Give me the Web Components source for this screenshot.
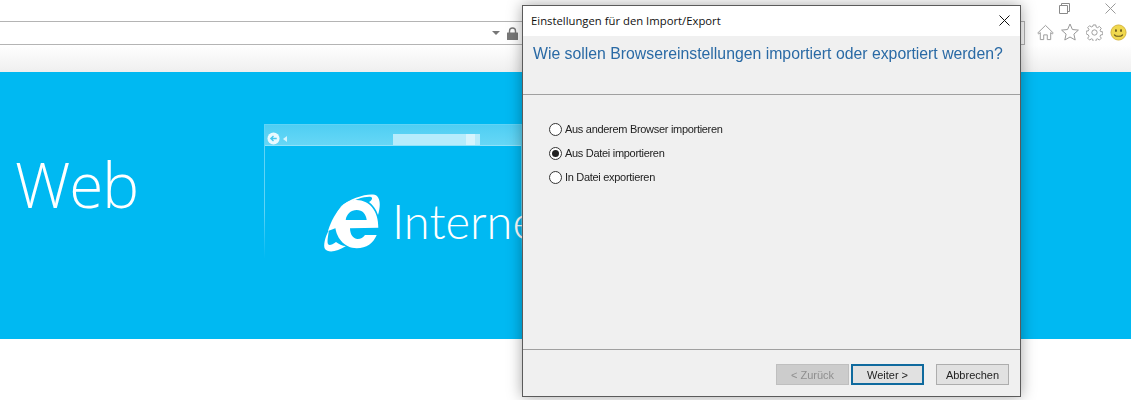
<!DOCTYPE html>
<html lang="de">
<head>
<meta charset="utf-8">
<title>Import/Export</title>
<style>
    html, body { margin: 0; height: 100%; background: #fff; overflow: hidden; }
    body { font-family: "Liberation Sans", Arial, sans-serif; }
</style>
</head>
<body>
<browser-window>
    <hero-banner></hero-banner>
</browser-window>
<import-dialog heading="Einstellungen für den Import/Export" question="Wie sollen Browsereinstellungen importiert oder exportiert werden?">
    <radio-option>Aus anderem Browser importieren</radio-option>
    <radio-option checked>Aus Datei importieren</radio-option>
    <radio-option>In Datei exportieren</radio-option>
    <dialog-button slot="buttons" disabled>&lt; Zurück</dialog-button>
    <dialog-button slot="buttons" primary>Weiter &gt;</dialog-button>
    <dialog-button slot="buttons" cancel>Abbrechen</dialog-button>
</import-dialog>

<script>
class BrowserWindow extends HTMLElement {
    constructor() {
        super();
        this.attachShadow({ mode: 'open' });
        this.shadowRoot.innerHTML = `
            <style>
                :host { display: block; height: 400px; background: #fff; }
                .top { height: 21px; display: flex; justify-content: flex-end; align-items: flex-start; background: #fff; }
                .controls { display: flex; gap: 35px; padding: 3px 15px 0 0; }
                .row { height: 22px; display: flex; align-items: flex-start; background: #fff; }
                .address {
                    box-sizing: border-box;
                    width: 1025px;
                    height: 24px;
                    border: 1px solid #b4b4b4;
                    border-left: 0;
                    display: flex;
                    justify-content: flex-end;
                    align-items: center;
                    gap: 7px;
                    padding-right: 506px;
                }
                .tools { display: flex; align-items: center; gap: 7px; padding: 2px 0 0 12px; }
                .fade { height: 27px; margin-top: 2px; background: linear-gradient(#fff, #efefef); }
                .fade-row { height: 27px; }
                svg { display: block; }
            </style>
            <div class="top">
                <div class="controls">
                    <svg width="11" height="11" viewBox="0 0 11 11" fill="none" stroke="#8a8a8a">
                        <path d="M.5 2.5h8v8h-8zM2.5 2.5v-2h8v8h-2"/>
                    </svg>
                    <svg width="11" height="11" viewBox="0 0 11 11" fill="none" stroke="#9a9a9a">
                        <path d="M.5.5l10 10M10.5.5l-10 10"/>
                    </svg>
                </div>
            </div>
            <div class="row">
                <div class="address">
                    <svg width="8" height="4" viewBox="0 0 8 4"><path d="M0 0h8L4 4z" fill="#777"/></svg>
                    <svg width="11" height="13" viewBox="0 0 11 13">
                        <path d="M2.5 6V4a3 3 0 0 1 6 0v2" fill="none" stroke="#777" stroke-width="1.4"/>
                        <rect y="5.5" width="11" height="7.5" rx=".5" fill="#777"/>
                    </svg>
                </div>
                <div class="tools">
                    <svg width="17" height="17" viewBox="0 0 18 18" fill="#fff" stroke="#999">
                        <path d="M.8 9.5L9 1.5l8.2 8-1.1 1L14.500 9v7.500h-3.600v-5H7.100v5H3.500V9l-1.600 1.500z"/>
                    </svg>
                    <svg width="18" height="18" viewBox="0 0 18 18" fill="#fff" stroke="#999">
                        <path d="M9 1l2.400 5.500 6 .6-4.500 4 1.300 5.900L9 14l-5.200 3 1.300-5.900-4.500-4 6-.6z"/>
                    </svg>
                    <svg width="17" height="17" viewBox="0 0 18 18" fill="none" stroke="#999">
                        <circle cx="9" cy="9" r="2.800"/>
                        <path d="M7.600 1h2.800l.4 2.300 1.500.6 1.900-1.300 2 2-1.300 1.900.6 1.500 2.300.4v2.800l-2.300.4-.6 1.500 1.300 1.900-2 2-1.900-1.300-1.500.6-.4 2.300H7.600l-.4-2.300-1.500-.6-1.900 1.300-2-2 1.300-1.900-.6-1.500L.2 10.400V7.600l2.300-.4.6-1.500-1.300-1.900 2-2 1.900 1.300 1.500-.6z" stroke-linejoin="round"/>
                    </svg>
                    <svg width="17" height="17" viewBox="0 0 18 18">
                        <circle cx="9" cy="9" r="8" fill="#f0d84e" stroke="#d3b43a"/>
                        <ellipse cx="6.300" cy="7" rx="1" ry="1.600" fill="#6a5a1c"/>
                        <ellipse cx="11.700" cy="7" rx="1" ry="1.600" fill="#6a5a1c"/>
                        <path d="M4.500 11c1.200 2.600 7.800 2.600 9 0" fill="none" stroke="#6a5a1c" stroke-width="1.200"/>
                    </svg>
                </div>
            </div>
            <div class="fade-row"><div class="fade"></div></div>
            <slot></slot>
        `;
    }
}

class HeroBanner extends HTMLElement {
    constructor() {
        super();
        this.attachShadow({ mode: 'open' });
        this.shadowRoot.innerHTML = `
            <style>
                :host {
                    display: flex;
                    box-sizing: border-box;
                    height: 267px;
                    padding: 52px 0 0 15px;
                    background: #00b9f2;
                    color: #fff;
                    overflow: hidden;
                    font-family: "Open Sans", sans-serif;
                }
                .title { width: 249px; font-size: 62px; font-weight: 300; line-height: 1; margin-top: 29px; letter-spacing: -1px; }
                .shot {
                    width: 258px;
                    height: 134px;
                    border: 1px solid;
                    border-bottom: 0;
                    border-image: linear-gradient(#5fd4f6 65%, rgba(95, 212, 246, 0)) 1;
                    box-sizing: border-box;
                    flex: none;
                }
                .bar {
                    height: 21px;
                    display: flex;
                    align-items: flex-start;
                    background: linear-gradient(#4fcef3, #66d7f6);
                    border-bottom: 1px solid #8fe2f9;
                    padding: 7px 0 0 2px;
                    gap: 3px;
                    box-sizing: border-box;
                }
                .arrow { margin-top: 4px; }
                .url { width: 87px; height: 11px; margin: 2px 0 0 102px; background: linear-gradient(90deg, #b6ecfc 0 84%, #d6f4fd 84% 94%, #b6ecfc 94%); }
                .brand { display: flex; align-items: flex-start; gap: 10px; margin: 47px 0 0 57px; }
                .brand span { font-family: Lato, sans-serif; font-size: 47px; font-weight: 300; line-height: 1; margin-top: 5px; white-space: nowrap; }
                svg { display: block; flex: none; }
            </style>
            <div class="title">Web</div>
            <div class="shot">
                <div class="bar">
                    <svg width="13" height="13" viewBox="0 0 14 14">
                        <circle cx="7" cy="7" r="6.500" fill="#eafaff"/>
                        <path d="M10.500 7H4.500M7 4.300L4.200 7 7 9.700" fill="none" stroke="#48c8ef" stroke-width="1.500"/>
                    </svg>
                    <svg class="arrow" width="5" height="6" viewBox="0 0 5 6"><path d="M4 0v6L0 3z" fill="#d5f4fd"/></svg>
                    <div class="url"></div>
                </div>
                <div class="brand">
                    <svg width="60" height="60" viewBox="0 0 60 60">
                        <path fill="#fff" fill-rule="evenodd" d="M56.300 34.700C56.800 18 47 7 34.700 7 22 7 13 17.500 13 30.300 13 44.500 22.500 55.300 34.700 55.300 44.500 55.300 51.500 50 54.700 42H43C41 44.500 39 46 35.700 46 31 46 28 41 28 35.300zM23.700 27C24.500 21 29 17 34.700 17 40.500 17 44 21 44.700 27z"/>
                        <path fill="#fff" d="M18 14C30 4 50-1 55 3 59 7 58 15 56 22 54 16 51 12 47 9 50 7 51 5 49 4 45 3 32 6 18 14z"/>
                        <path fill="#fff" d="M6 38C9 28 14 19 20 13L24 16 14 35z"/>
                        <path fill="#fff" d="M7 37C3 44 1 53 3 56 6 60 15 59 24 53 20 53 17 51 14 49 10 52 7 53 6 51 5 49 6 43 7 37z"/>
                    </svg>
                    <span>Interne</span>
                </div>
            </div>
        `;
    }
}

class ImportDialog extends HTMLElement {
    constructor() {
        super();
        this.attachShadow({ mode: 'open' });
        this.shadowRoot.innerHTML = `
            <style>
                :host {
                    position: fixed;
                    left: 522px;
                    top: 5px;
                    width: 499px;
                    height: 392px;
                    box-sizing: border-box;
                    display: flex;
                    flex-direction: column;
                    background: #f0f0f0;
                    border: 1px solid #5b5b5b;
                    box-shadow: 0 0 14px rgba(0, 0, 0, .35);
                    color: #111;
                }
                .titlebar {
                    height: 30px;
                    flex: none;
                    box-sizing: border-box;
                    display: flex;
                    align-items: center;
                    justify-content: space-between;
                    background: #fff;
                    padding: 0 10px 2px 8px;
                    font: 11.300px "Open Sans", sans-serif;
                }
                .question {
                    height: 59px;
                    flex: none;
                    box-sizing: border-box;
                    padding-top: 9px;
                    border-bottom: 1px solid #a0a0a0;
                    padding-left: 10px;
                    font: 15.800px "Liberation Sans", Arial, sans-serif;
                    color: #2a6aa5;
                }
                .options {
                    flex: 1;
                    display: flex;
                    flex-direction: column;
                    gap: 8px;
                    padding: 26px 0 0 26px;
                }
                .footer {
                    height: 47px;
                    flex: none;
                    box-sizing: border-box;
                    border-top: 1px solid #a0a0a0;
                    display: flex;
                    justify-content: flex-end;
                    align-items: flex-start;
                    padding: 14px 11px 0 0;
                }
                svg { display: block; }
            </style>
            <div class="titlebar">
                <span id="heading"></span>
                <svg width="11" height="11" viewBox="0 0 11 11" fill="none" stroke="#111"><path d="M.5.5l10 10M10.500.5l-10 10"/></svg>
            </div>
            <div class="question" id="question"></div>
            <div class="options"><slot></slot></div>
            <div class="footer"><slot name="buttons"></slot></div>
        `;
    }

    connectedCallback() {
        this.shadowRoot.getElementById('heading').textContent = this.getAttribute('heading');
        this.shadowRoot.getElementById('question').textContent = this.getAttribute('question');
    }
}

class RadioOption extends HTMLElement {
    constructor() {
        super();
        this.attachShadow({ mode: 'open' });
        this.shadowRoot.innerHTML = `
            <style>
                :host {
                    display: flex;
                    align-items: center;
                    gap: 3px;
                    height: 16px;
                    font: 11px "Liberation Sans", Arial, sans-serif;
                    letter-spacing: -.3px;
                    color: #222;
                }
                .dot {
                    box-sizing: border-box;
                    width: 13px;
                    height: 13px;
                    border: 1px solid #333;
                    border-radius: 50%;
                    background: #fff;
                    display: flex;
                    align-items: center;
                    justify-content: center;
                }
                :host([checked]) .dot::after {
                    content: "";
                    width: 7px;
                    height: 7px;
                    border-radius: 50%;
                    background: #222;
                }
            </style>
            <span class="dot"></span><slot></slot>
        `;
    }
}

class DialogButton extends HTMLElement {
    constructor() {
        super();
        this.attachShadow({ mode: 'open' });
        this.shadowRoot.innerHTML = `
            <style>
                :host {
                    display: inline-flex;
                    box-sizing: border-box;
                    width: 73px;
                    height: 21px;
                    align-items: center;
                    justify-content: center;
                    background: #e1e1e1;
                    border: 1px solid #adadad;
                    font: 11px "Liberation Sans", Arial, sans-serif;
                    color: #222;
                }
                :host([disabled]) { background: #cccccc; border-color: #bfbfbf; color: #8f8f8f; margin-right: 2px; }
                :host([primary]) { border: 2px solid #0f6a9e; margin-right: 12px; }
            </style>
            <slot></slot>
        `;
    }
}

customElements.define('browser-window', BrowserWindow);
customElements.define('hero-banner', HeroBanner);
customElements.define('import-dialog', ImportDialog);
customElements.define('radio-option', RadioOption);
customElements.define('dialog-button', DialogButton);
</script>
</body>
</html>
